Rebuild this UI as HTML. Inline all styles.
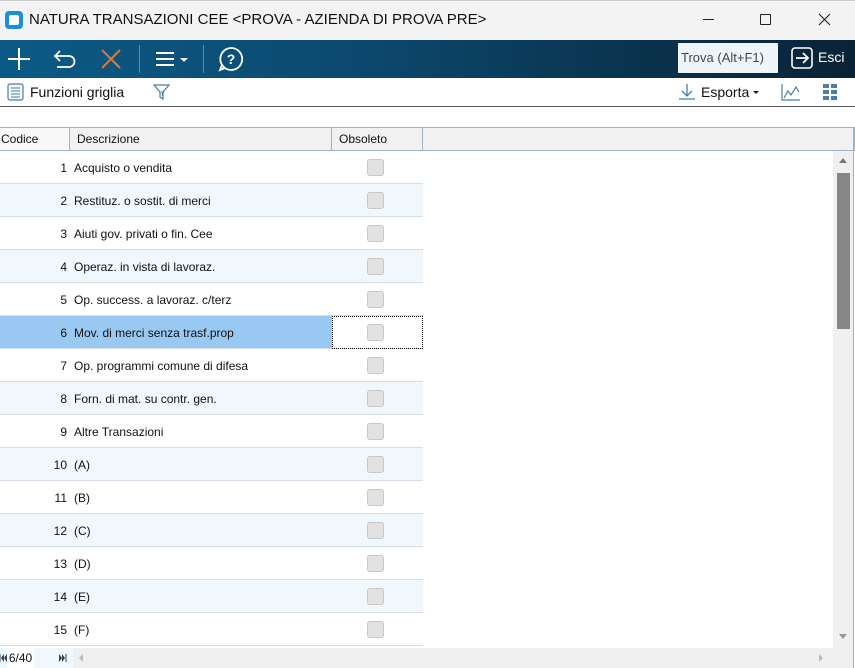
<!DOCTYPE html>
<html><head><meta charset="utf-8"><style>
*{box-sizing:border-box;margin:0;padding:0}
body{width:855px;height:668px;overflow:hidden;background:#fff;font-family:"Liberation Sans",sans-serif;position:relative;font-size:12px;color:#111}
.abs{position:absolute}
#title{left:0;top:0;width:855px;height:40px;background:#f3f3f3;border-top:1px solid #ccc}
#tb{left:0;top:40px;width:855px;height:38px;background:linear-gradient(90deg,#0b5a86 0%,#0c4a70 40%,#0a2f48 80%,#0a2236 100%)}
#tb2{left:0;top:78px;width:855px;height:29px;background:#fff;border-bottom:1px solid #555}
.hdr{top:127px;height:24px;background:#f1f1f1;border-top:1px solid #9fb3c8;border-bottom:1px solid #9fb3c8;font-size:12px;line-height:22px}
.row{left:0;width:423px;height:33px;border-bottom:1px solid #d4dde6}
.cb{position:absolute;left:367px;top:8px;width:17px;height:17px;border:1px solid #c8c8c8;border-radius:3px;background:#e2e2e2}
.num{position:absolute;right:356px;top:1px;line-height:32px}
.desc{position:absolute;left:74px;top:1px;line-height:32px}
</style></head><body>
<div id="title" class="abs">
 <div class="abs" style="left:5px;top:10px;width:18px;height:18px;border-radius:4px;background:#1c8fd8"><div class="abs" style="left:4px;top:4px;width:10px;height:10px;background:#fff;border-radius:2px 2px 2px 0"></div></div>
 <div class="abs" style="left:29px;top:10px;font-size:15px;color:#111">NATURA TRANSAZIONI CEE &lt;PROVA - AZIENDA DI PROVA PRE&gt;</div>
 <div class="abs" style="left:703px;top:18px;width:11px;height:1px;background:#222"></div>
 <div class="abs" style="left:760px;top:13px;width:11px;height:11px;border:1px solid #222;border-radius:1px"></div>
 <svg class="abs" style="left:818px;top:12px" width="13" height="13"><path d="M1 1L12 12M12 1L1 12" stroke="#222" stroke-width="1.1"/></svg>
</div>
<div id="tb" class="abs">
 <svg class="abs" style="left:6px;top:6px" width="26" height="26"><path d="M13 2V24M2 13H24" stroke="#fff" stroke-width="2"/></svg>
 <svg class="abs" style="left:52px;top:8px" width="26" height="22"><path d="M8 3L3 8L8 13M3 8H17A5.5 5.5 0 0 1 17 19H5" fill="none" stroke="#fff" stroke-width="1.8"/></svg>
 <svg class="abs" style="left:100px;top:8px" width="22" height="22"><path d="M2 2L20 20M20 2L2 20" stroke="#e0763f" stroke-width="2"/></svg>
 <div class="abs" style="left:139px;top:5px;width:1px;height:28px;background:#5c8aa8"></div>
 <svg class="abs" style="left:156px;top:10px" width="34" height="18"><path d="M0 3H18M0 9H18M0 15H18" stroke="#fff" stroke-width="2"/><path d="M24 8H32L28 12Z" fill="#fff"/></svg>
 <div class="abs" style="left:203px;top:5px;width:1px;height:28px;background:#5c8aa8"></div>
 <svg class="abs" style="left:218px;top:6px" width="26" height="26"><path d="M13 2A11 11 0 1 1 4 19L2 24L7 22A11 11 0 0 1 13 2Z" fill="none" stroke="#fff" stroke-width="1.8"/><text x="13" y="18" font-family="Liberation Sans" font-size="14" font-weight="bold" fill="#fff" text-anchor="middle">?</text></svg>
 <div class="abs" style="left:678px;top:3px;width:100px;height:30px;background:#eef6fc;color:#445;font-size:13px;line-height:30px;padding-left:3px">Trova (Alt+F1)</div>
 <svg class="abs" style="left:790px;top:6px" width="24" height="24"><rect x="2" y="2" width="20" height="20" rx="3" fill="none" stroke="#fff" stroke-width="1.6"/><path d="M6 12H18M13 7L18 12L13 17" fill="none" stroke="#fff" stroke-width="1.8"/></svg>
 <div class="abs" style="left:818px;top:9px;color:#fff;font-size:14px">Esci</div>
</div>
<div id="tb2" class="abs">
 <svg class="abs" style="left:7px;top:5px" width="17" height="18"><rect x="1" y="1" width="15" height="16" rx="2" fill="#f4f8fb" stroke="#4a7ea6" stroke-width="1.2"/><path d="M4 5H13M4 8H13M4 11H13M4 14H13" stroke="#4a7ea6"/></svg>
 <div class="abs" style="left:30px;top:6px;font-size:14px">Funzioni griglia</div>
 <svg class="abs" style="left:153px;top:5px" width="18" height="18"><path d="M1 2H16L10 9V16L7 14V9Z" fill="none" stroke="#4a7ea6" stroke-width="1.2"/><path d="M8 9H11M9.5 9V13" stroke="#4a7ea6"/></svg>
 <svg class="abs" style="left:678px;top:5px" width="18" height="18"><path d="M9 1V13M4 8L9 13L14 8M1 16H17" fill="none" stroke="#4a7ea6" stroke-width="1.3"/></svg>
 <div class="abs" style="left:701px;top:6px;font-size:14px">Esporta</div>
 <svg class="abs" style="left:753px;top:13px" width="7" height="4"><path d="M0 0H6L3 3Z" fill="#222"/></svg>
 <svg class="abs" style="left:781px;top:5px" width="20" height="18"><path d="M1 1V17H19" fill="none" stroke="#4a7ea6" stroke-width="1.2"/><path d="M3 15L7 8L10 12L15 4L18 9" fill="none" stroke="#4a7ea6" stroke-width="1.2"/></svg>
 <svg class="abs" style="left:823px;top:6px" width="15" height="16"><g fill="#4a7ea6"><rect x="0" y="0" width="6" height="4"/><rect x="8" y="0" width="6" height="4"/><rect x="0" y="6" width="6" height="4"/><rect x="8" y="6" width="6" height="4"/><rect x="0" y="12" width="6" height="4"/><rect x="8" y="12" width="6" height="4"/></g></svg>
</div>
<div class="abs hdr" style="left:0;width:855px;border-right:1px solid #9fb3c8"></div>
<div class="abs hdr" style="left:0;width:70px;background:#f8f8f8;border-right:1px solid #9fb3c8;padding-left:1px">Codice</div>
<div class="abs hdr" style="left:70px;width:262px;border-right:1px solid #9fb3c8;padding-left:7px">Descrizione</div>
<div class="abs hdr" style="left:332px;width:91px;border-right:1px solid #9fb3c8;padding-left:7px">Obsoleto</div>
<div class="abs" style="left:853px;top:127px;width:1px;height:541px;background:#9fb3c8"></div>

<div class="abs row" style="top:151px;background:#fff"><span class="num">1</span><span class="desc">Acquisto o vendita</span><div class="cb"></div></div>
<div class="abs row" style="top:184px;background:#f0f7fd"><span class="num">2</span><span class="desc">Restituz. o sostit. di merci</span><div class="cb"></div></div>
<div class="abs row" style="top:217px;background:#fff"><span class="num">3</span><span class="desc">Aiuti gov. privati o fin. Cee</span><div class="cb"></div></div>
<div class="abs row" style="top:250px;background:#f0f7fd"><span class="num">4</span><span class="desc">Operaz. in vista di lavoraz.</span><div class="cb"></div></div>
<div class="abs row" style="top:283px;background:#fff"><span class="num">5</span><span class="desc">Op. success. a lavoraz. c/terz</span><div class="cb"></div></div>
<div class="abs row" style="top:316px;background:linear-gradient(90deg,#99c9f2 332px,#fff 332px)"><span class="num">6</span><span class="desc">Mov. di merci senza trasf.prop</span><div class="abs" style="left:332px;top:0;width:91px;height:33px;border:1px dotted #000"></div><div class="cb"></div></div>
<div class="abs row" style="top:349px;background:#fff"><span class="num">7</span><span class="desc">Op. programmi comune di difesa</span><div class="cb"></div></div>
<div class="abs row" style="top:382px;background:#f0f7fd"><span class="num">8</span><span class="desc">Forn. di mat. su contr. gen.</span><div class="cb"></div></div>
<div class="abs row" style="top:415px;background:#fff"><span class="num">9</span><span class="desc">Altre Transazioni</span><div class="cb"></div></div>
<div class="abs row" style="top:448px;background:#f0f7fd"><span class="num">10</span><span class="desc">(A)</span><div class="cb"></div></div>
<div class="abs row" style="top:481px;background:#fff"><span class="num">11</span><span class="desc">(B)</span><div class="cb"></div></div>
<div class="abs row" style="top:514px;background:#f0f7fd"><span class="num">12</span><span class="desc">(C)</span><div class="cb"></div></div>
<div class="abs row" style="top:547px;background:#fff"><span class="num">13</span><span class="desc">(D)</span><div class="cb"></div></div>
<div class="abs row" style="top:580px;background:#f0f7fd"><span class="num">14</span><span class="desc">(E)</span><div class="cb"></div></div>
<div class="abs row" style="top:613px;background:#fff"><span class="num">15</span><span class="desc">(F)</span><div class="cb"></div></div>

<div class="abs" style="left:833px;top:151px;width:20px;height:497px;background:#f0f0f0"></div>
<svg class="abs" style="left:839px;top:158px" width="9" height="6"><path d="M0 5H8L4 0Z" fill="#777"/></svg>
<div class="abs" style="left:837px;top:173px;width:13px;height:156px;background:#868686"></div>
<svg class="abs" style="left:839px;top:634px" width="9" height="6"><path d="M0 0H8L4 5Z" fill="#999"/></svg>

<div class="abs" style="left:0;top:648px;width:853px;height:20px;background:#f0f0f0"></div>
<div class="abs" style="left:0;top:648px;width:43px;height:20px;background:#f0f7fd"></div>
<div class="abs" style="left:7px;top:648px;width:27px;height:20px;background:#fff;font-size:12px;line-height:20px;text-align:center">6/40</div>
<svg class="abs" style="left:0;top:654px" width="7" height="8"><path d="M0 0V8" stroke="#345"/><path d="M4 0V8L1 4Z M7 0V8L4 4Z" fill="#345"/></svg>
<div class="abs" style="left:43px;top:648px;width:30px;height:20px;background:#f0f7fd"></div>
<svg class="abs" style="left:59px;top:654px" width="8" height="8"><path d="M0 0V8L3 4Z M3 0V8L6 4Z" fill="#345"/><path d="M7 0V8" stroke="#345"/></svg>
<svg class="abs" style="left:79px;top:654px" width="5" height="8"><path d="M4 0V8L0 4Z" fill="#bbb"/></svg>
<svg class="abs" style="left:819px;top:654px" width="5" height="8"><path d="M0 0V8L4 4Z" fill="#bbb"/></svg>
</body></html>
